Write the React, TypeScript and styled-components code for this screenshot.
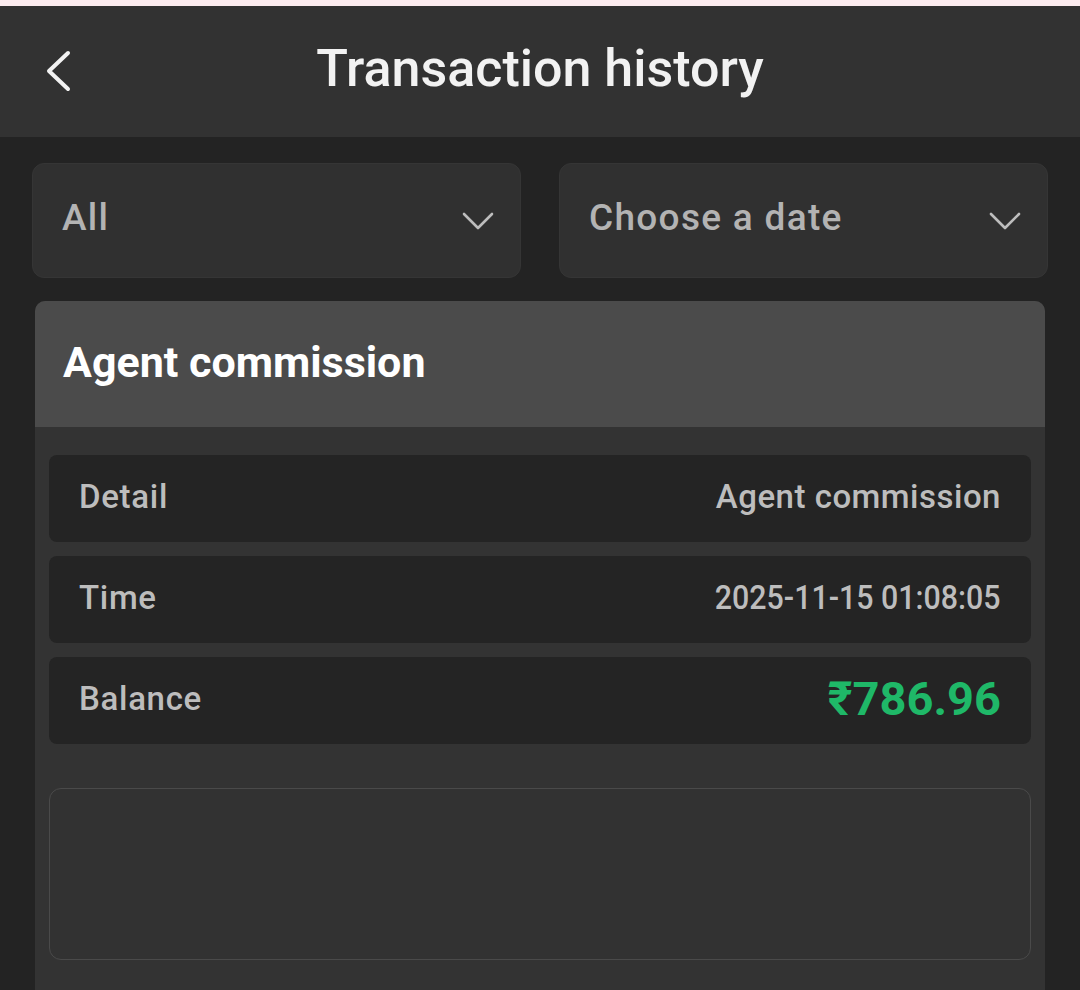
import React from 'react'
import styled, { createGlobalStyle } from 'styled-components'

const GlobalStyle = createGlobalStyle`
  html, body {
    margin: 0;
    padding: 0;
    background: #232323;
  }
  body {
    font-family: Roboto, "Noto Sans", sans-serif;
  }
`

type Kind = 'text' | 'time' | 'money'

const rows: { label: string; value: string; kind: Kind }[] = [
  { label: 'Detail', value: 'Agent commission', kind: 'text' },
  { label: 'Time', value: '2025-11-15 01:08:05', kind: 'time' },
  { label: 'Balance', value: '₹786.96', kind: 'money' },
]

const Chevron: React.FC = () => (
  <svg width="32" height="18" viewBox="0 0 32 18" fill="none">
    <path d="M2 2 L16 16 L30 2" stroke="#bdbdbd" strokeWidth="2.6" strokeLinecap="round" strokeLinejoin="round" />
  </svg>
)

const App: React.FC = () => {
  return (
    <>
      <GlobalStyle />
      <Page>
        <TopStrip />
        <Header>
          <BackButton aria-label="back">
            <svg width="28" height="42" viewBox="0 0 28 42" fill="none">
              <path d="M24 3 L5 21 L24 39" stroke="#f2f2f2" strokeWidth="4" strokeLinecap="round" strokeLinejoin="round" />
            </svg>
          </BackButton>
          <Title>Transaction history</Title>
        </Header>
        <Content>
          <Filters>
            <Select>
              <SelectText>All</SelectText>
              <Chevron />
            </Select>
            <Select>
              <SelectText>Choose a date</SelectText>
              <Chevron />
            </Select>
          </Filters>
          <Card>
            <CardHead>Agent commission</CardHead>
            <CardBody>
              {rows.map((row) => (
                <Row key={row.label}>
                  <Label>{row.label}</Label>
                  <Value $kind={row.kind}>{row.value}</Value>
                </Row>
              ))}
              <Note />
            </CardBody>
          </Card>
        </Content>
      </Page>
    </>
  )
}

const Page = styled.div`
  width: 1080px;
  height: 990px;
  overflow: hidden;
  background: #232323;
`

const TopStrip = styled.div`
  height: 6px;
  background: #fcecef;
`

const Header = styled.header`
  height: 131px;
  background: #323232;
  display: flex;
  align-items: center;
  justify-content: center;
  position: relative;
`

const BackButton = styled.button`
  position: absolute;
  left: 44px;
  top: 44px;
  background: none;
  border: none;
  padding: 0;
  display: flex;
`

const Title = styled.h1`
  margin: 0 0 6px;
  color: #f2f2f2;
  font-size: 52px;
  font-weight: 500;
  letter-spacing: 0;
`

const Content = styled.main`
  padding: 26px 32px 0;
`

const Filters = styled.div`
  display: grid;
  grid-template-columns: 1fr 1fr;
  gap: 38px;
`

const Select = styled.div`
  height: 115px;
  box-sizing: border-box;
  background: #303030;
  border: 1px solid #353535;
  border-radius: 12px;
  display: flex;
  align-items: center;
  justify-content: space-between;
  padding: 0 26px 0 29px;
`

const SelectText = styled.span`
  color: #b3b3b3;
  font-size: 37px;
  font-weight: 500;
  letter-spacing: 1.3px;
  margin-top: -6px;
`

const Card = styled.section`
  margin: 23px 3px 0;
  background: #333333;
  border-radius: 10px 10px 0 0;
  overflow: hidden;
`

const CardHead = styled.h2`
  margin: 0;
  height: 126px;
  box-sizing: border-box;
  background: #4b4b4b;
  color: #ffffff;
  font-size: 43px;
  font-weight: 700;
  display: flex;
  align-items: center;
  padding: 0 0 4px 28px;
`

const CardBody = styled.div`
  padding: 28px 14px 40px;
  display: flex;
  flex-direction: column;
  gap: 14px;
`

const Row = styled.div`
  height: 87px;
  background: #242424;
  border-radius: 8px;
  display: flex;
  align-items: center;
  justify-content: space-between;
  padding: 0 30px;
`

const Label = styled.span`
  color: #bdbdbd;
  font-size: 33px;
  font-weight: 500;
  letter-spacing: 0.7px;
  margin-top: -4px;
`

const Value = styled.span<{ $kind: Kind }>`
  color: ${(p) => (p.$kind === 'money' ? '#1fb868' : '#bdbdbd')};
  font-size: ${(p) => (p.$kind === 'money' ? '47px' : '33px')};
  font-weight: ${(p) => (p.$kind === 'money' ? 700 : 500)};
  letter-spacing: ${(p) => (p.$kind === 'text' ? '0.5px' : '0')};
  margin-top: -4px;
  transform-origin: right center;
  transform: scaleX(${(p) => (p.$kind === 'time' ? 0.92 : 1)});
`

const Note = styled.div`
  margin-top: 30px;
  height: 170px;
  border: 1px solid #4a4a4a;
  border-radius: 12px;
  background: #323232;
`

export default App
